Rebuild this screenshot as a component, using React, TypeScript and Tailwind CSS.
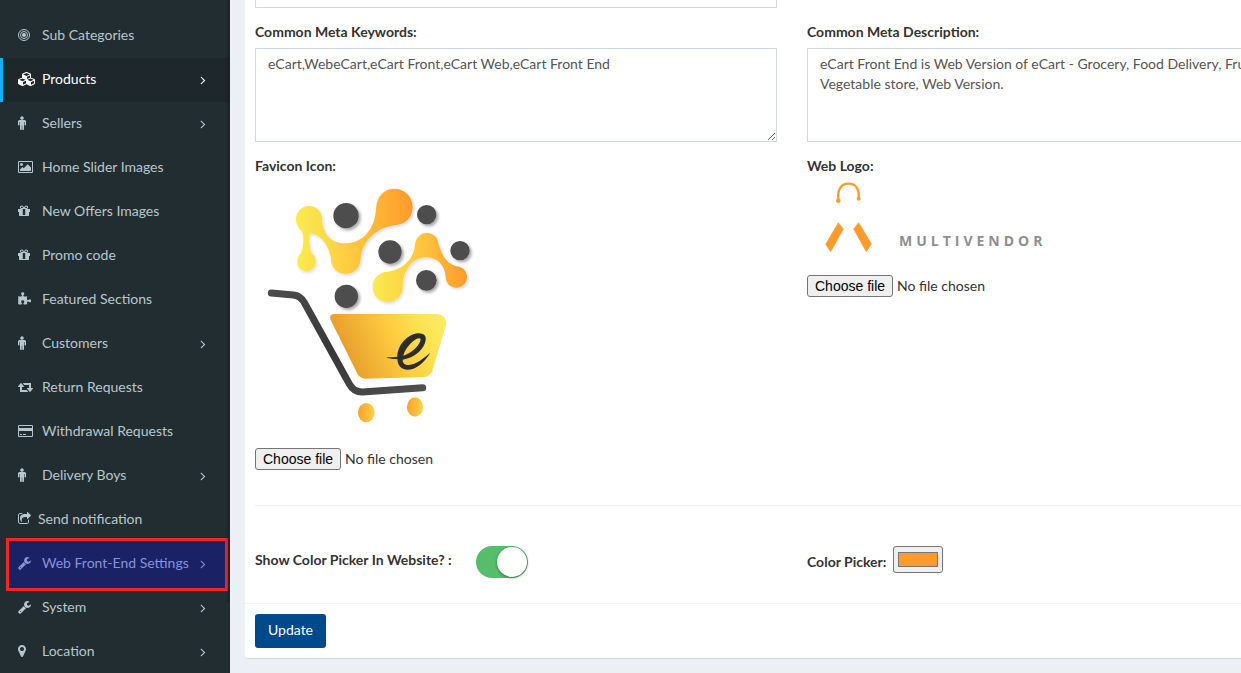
import React, { useState } from "react";

type Glyph = { box: string; width: string; path: React.ReactNode };

const glyphs: Record<string, Glyph> = {
  bullseye: {
    box: "128 0 1536 1792",
    width: "w-3",
    path: (
      <>
        <circle cx="896" cy="896" r="256" />
        <circle cx="896" cy="896" r="448" fill="none" stroke="currentColor" strokeWidth="128" />
        <circle cx="896" cy="896" r="704" fill="none" stroke="currentColor" strokeWidth="128" />
      </>
    ),
  },
  cubes: {
    box: "0 0 2304 1792",
    width: "w-[18px]",
    path: (
      <path d="M640 1632l384-192v-314l-384 164v342zm-64-454l404-173-404-173-404 173zm1088 454l384-192v-314l-384 164v342zm-64-454l404-173-404-173-404 173zm-448-293l384-165v-266l-384 164v267zm-64-379l441-189-441-189-441 189zm1088 518v416q0 36-19 67t-52 47l-448 224q-25 14-57 14t-57-14l-448-224q-4-2-7-4-2 2-7 4l-448 224q-25 14-57 14t-57-14l-448-224q-33-16-52-47t-19-67v-416q0-38 21.5-70t56.5-48l434-186v-400q0-38 21.5-70t56.5-48l448-192q23-10 50-10t50 10l448 192q35 16 56.5 48t21.5 70v400l434 186q36 16 57 48t21 70z" />
    ),
  },
  male: {
    box: "384 0 1024 1792",
    width: "w-2",
    path: (
      <path d="M1408 704v416q0 40-28 68t-68 28-68-28-28-68v-352h-64v912q0 46-33 79t-79 33-79-33-33-79v-464h-64v464q0 46-33 79t-79 33-79-33-33-79v-912h-64v352q0 40-28 68t-68 28-68-28-28-68v-416q0-80 56-136t136-56h640q80 0 136 56t56 136zm-288-448q0 93-65.5 158.5t-158.5 65.5-158.5-65.5-65.5-158.5 65.5-158.5 158.5-65.5 158.5 65.5 65.5 158.5z" />
    ),
  },
  picture: {
    box: "-64 0 1920 1792",
    width: "w-[15px]",
    path: (
      <path d="M576 576q0 80-56 136t-136 56-136-56-56-136 56-136 136-56 136 56 56 136zm1024 384v448h-1408v-192l320-320 160 160 512-512zm96-704h-1600q-13 0-22.5 9.5t-9.5 22.5v1216q0 13 9.5 22.5t22.5 9.5h1600q13 0 22.5-9.5t9.5-22.5v-1216q0-13-9.5-22.5t-22.5-9.5zm160 32v1216q0 66-47 113t-113 47h-1600q-66 0-113-47t-47-113v-1216q0-66 47-113t113-47h1600q66 0 113 47t47 113z" />
    ),
  },
  gift: {
    box: "128 0 1536 1792",
    width: "w-3",
    path: (
      <path d="M1056 1356v-716h-320v716q0 25 18 38.5t46 13.5h192q28 0 46-13.5t18-38.5zm-456-844h195l-126-161q-26-31-69-31-40 0-68 28t-28 68 28 68 68 28zm688-96q0-40-28-68t-68-28q-43 0-69 31l-125 161h194q40 0 68-28t28-68zm376 256v320q0 14-9 23t-23 9h-96v416q0 40-28 68t-68 28h-1088q-40 0-68-28t-28-68v-416h-96q-14 0-23-9t-9-23v-320q0-14 9-23t23-9h440q-93 0-158.5-65.5t-65.5-158.5 65.5-158.5 158.5-65.5q107 0 168 77l128 165 128-165q61-77 168-77 93 0 158.5 65.5t65.5 158.5-65.5 158.5-158.5 65.5h440q14 0 23 9t9 23z" />
    ),
  },
  puzzle: {
    box: "64 0 1664 1792",
    width: "w-[13px]",
    path: (
      <path d="M1755 1131q0 81-44.5 135t-123.5 54q-41 0-77.5-17.5t-59-38-56.5-38-71-17.5q-110 0-110 124 0 39 16 115t15 115v5q-22 0-33 1-34 3-97.5 11.5t-115.5 13.5-98 5q-61 0-103-26.5t-42-83.5q0-37 17.5-71t38-56.5 38-59 17.5-77.5q0-79-54-123.5t-135-44.5q-84 0-143 45.5t-59 127.5q0 43 15 83t33.5 64.5 33.5 53 15 50.5q0 45-46 89-37 35-117 35-95 0-245-24-9-2-27.5-4t-27.5-4l-13-2q-1 0-3-1-2 0-2-1v-1024q2 1 17.5 3.5t34 5 21.5 3.5q150 24 245 24 80 0 117-35 46-44 46-89 0-22-15-50.5t-33.5-53-33.5-64.5-15-83q0-82 59-127.5t144-45.5q80 0 134 44.5t54 123.5q0 41-17.5 77.5t-38 59-38 56.5-17.5 71q0 57 42 83.5t103 26.5q64 0 180-15t163-17v2q-1 2-3.5 17.5t-5 34-3.5 21.5q-24 150-24 245 0 80 35 117 44 46 89 46 22 0 50.5-15t53-33.5 64.5-33.5 83-15q82 0 127.5 59t45.5 143z" />
    ),
  },
  retweet: {
    box: "0 0 1920 1792",
    width: "w-[15px]",
    path: (
      <path d="M1280 1504q0 13-9.5 22.5t-22.5 9.5h-960q-8 0-13.5-2t-9-7-5.5-8-3-11.5-1-11.5v-600h-192q-26 0-45-19t-19-45q0-24 15-41l320-384q19-22 49-22t49 22l320 384q15 17 15 41 0 26-19 45t-45 19h-192v384h576q16 0 25 11l160 192q7 10 7 21zm640-416q0 24-15 41l-320 384q-20 23-49 23t-49-23l-320-384q-15-17-15-41 0-26 19-45t45-19h192v-384h-576q-16 0-25-12l-160-192q-7-9-7-20 0-13 9.5-22.5t22.5-9.5h960q8 0 13.5 2t9 7 5.5 8 3 11.5 1 11.5v600h192q26 0 45 19t19 45z" />
    ),
  },
  card: {
    box: "0 0 1920 1792",
    width: "w-[15px]",
    path: (
      <path d="M1760 128q66 0 113 47t47 113v1216q0 66-47 113t-113 47h-1600q-66 0-113-47t-47-113v-1216q0-66 47-113t113-47h1600zm-1600 128q-13 0-22.5 9.5t-9.5 22.5v224h1664v-224q0-13-9.5-22.5t-22.5-9.5h-1600zm1600 1280q13 0 22.5-9.5t9.5-22.5v-608h-1664v608q0 13 9.5 22.5t22.5 9.5h1600zm-1504-128v-128h256v128h-256zm384 0v-128h384v128h-384z" />
    ),
  },
  share: {
    box: "64 0 1664 1792",
    width: "w-[13px]",
    path: (
      <path d="M1472 989v259q0 119-84.5 203.5t-203.5 84.5h-832q-119 0-203.5-84.5t-84.5-203.5v-832q0-119 84.5-203.5t203.5-84.5h255q13 0 22.5 9.5t9.5 22.5q0 27-26 32-77 26-133 60-10 4-16 4h-112q-66 0-113 47t-47 113v832q0 66 47 113t113 47h832q66 0 113-47t47-113v-214q0-19 18-29 28-13 54-37 16-16 35-8 21 9 21 29zm237-496l-384 384q-18 19-45 19-12 0-25-5-39-17-39-59v-192h-160q-323 0-438 131-119 137-74 473 3 23-20 34-8 2-12 2-16 0-26-13-10-14-21-31t-39.5-68.5-49.5-99.5-38.5-114-17.5-122q0-49 3.5-91t14-90 28-88 47-81.5 68.5-74 94.5-61.5 124.5-48.5 159.5-30.5 196.5-11h160v-192q0-42 39-59 13-5 25-5 26 0 45 19l384 384q19 19 19 45t-19 45z" />
    ),
  },
  wrench: {
    box: "64 0 1664 1792",
    width: "w-[13px]",
    path: (
      <path d="M448 1472q0-26-19-45t-45-19-45 19-19 45 19 45 45 19 45-19 19-45zm644-420l-682 682q-37 37-90 37-52 0-91-37l-106-108q-38-36-38-90 0-53 38-91l681-681q39 98 114.5 173.5t173.5 114.5zm634-435q0 39-23 106-47 134-164.5 217.5t-258.5 83.5q-185 0-316.5-131.5t-131.5-316.5 131.5-316.5 316.5-131.5q58 0 121.5 16.5t107.5 46.5q16 11 16 28t-16 28l-293 169v224l193 107q5-3 79-48.5t135.5-81 70.5-35.5q15 0 23.5 10t8.5 25z" />
    ),
  },
  marker: {
    box: "384 0 1024 1792",
    width: "w-2",
    path: (
      <path d="M1152 640q0-106-75-181t-181-75-181 75-75 181 75 181 181 75 181-75 75-181zm256 0q0 109-33 179l-364 774q-16 33-47.5 52t-67.5 19-67.5-19-46.5-52l-365-774q-33-70-33-179 0-212 150-362t362-150 362 150 150 362z" />
    ),
  },
  angle: {
    box: "512 0 768 1792",
    width: "w-[6px]",
    path: (
      <path d="M1171 960q0 13-10 23l-466 466q-10 10-23 10t-23-10l-50-50q-10-10-10-23t10-23l393-393-393-393q-10-10-10-23t10-23l50-50q10-10 23-10t23 10l466 466q10 10 10 23z" />
    ),
  },
};

function Icon({ name }: { name: string }) {
  const g = glyphs[name];
  return (
    <svg viewBox={g.box} fill="currentColor" aria-hidden="true" className={`h-3.5 shrink-0 ${g.width}`}>
      {g.path}
    </svg>
  );
}

type Item = { label: string; icon: string; more?: boolean; state?: "active" | "marked"; tight?: boolean };

const items: Item[] = [
  { label: "Sub Categories", icon: "bullseye" },
  { label: "Products", icon: "cubes", more: true, state: "active" },
  { label: "Sellers", icon: "male", more: true },
  { label: "Home Slider Images", icon: "picture" },
  { label: "New Offers Images", icon: "gift" },
  { label: "Promo code", icon: "gift" },
  { label: "Featured Sections", icon: "puzzle" },
  { label: "Customers", icon: "male", more: true },
  { label: "Return Requests", icon: "retweet" },
  { label: "Withdrawal Requests", icon: "card" },
  { label: "Delivery Boys", icon: "male", more: true },
  { label: "Send notification", icon: "share", tight: true },
  { label: "Web Front-End Settings", icon: "wrench", more: true, state: "marked" },
  { label: "System", icon: "wrench", more: true },
  { label: "Location", icon: "marker", more: true },
];

function rowColors(state?: Item["state"]) {
  if (state === "active") return "border-[#12b0ff] bg-[#1e282c] text-white";
  if (state === "marked") return "border-transparent text-[#8792dc]";
  return "border-transparent text-[#b8c7ce]";
}

function Sidebar() {
  return (
    <aside className="relative w-[230px] shrink-0 bg-[#222d32] pt-[14px]">
      <nav aria-label="Main">
        <ul>
          {items.map((item) => (
            <li key={item.label} className="relative">
              {item.state === "marked" && (
                <span className="absolute -top-1 -bottom-[5px] left-[6px] right-[2px] border-3 border-[#ee2529] bg-[#1a2164]" />
              )}
              <a
                href="#"
                className={`relative flex h-11 items-center border-l-3 pb-[2px] pl-[15px] pr-6 text-[14px] leading-5 ${rowColors(item.state)}`}
              >
                <span className={`flex shrink-0 ${item.tight ? "w-5" : "w-6"}`}>
                  <Icon name={item.icon} />
                </span>
                <span className="flex-1 whitespace-nowrap">{item.label}</span>
                {item.more && (
                  <span className="flex pt-[2px]">
                    <Icon name="angle" />
                  </span>
                )}
              </a>
            </li>
          ))}
        </ul>
      </nav>
      <span className="absolute right-0 top-0 h-[603px] w-1 bg-black/10" />
    </aside>
  );
}

function FavIcon() {
  const dots = [
    [258, 107, 38],
    [500, 104, 29],
    [390, 216, 35],
    [600, 212, 29],
    [499, 301, 31],
    [259, 349, 35],
  ];
  return (
    <svg viewBox="-15 0 660 750" className="h-[250px] w-[220px]" role="img" aria-label="Shopping cart">
      <defs>
        <linearGradient id="warm">
          <stop offset="0" stopColor="#f9ec4f" />
          <stop offset="0.45" stopColor="#ffcb41" />
          <stop offset="1" stopColor="#ff9a2b" />
        </linearGradient>
        <linearGradient id="basket" x1="0" y1="0.65" x2="1" y2="0.4">
          <stop offset="0" stopColor="#e08f28" />
          <stop offset="0.25" stopColor="#edab32" />
          <stop offset="0.6" stopColor="#ffcd40" />
          <stop offset="0.85" stopColor="#fde254" />
          <stop offset="1" stopColor="#fdea5e" />
        </linearGradient>
        <linearGradient id="wheel">
          <stop offset="0" stopColor="#ff9f2e" />
          <stop offset="1" stopColor="#fbd448" />
        </linearGradient>
        <linearGradient id="frame" x1="0" y1="0" x2="1" y2="1">
          <stop offset="0" stopColor="#4b4b4b" />
          <stop offset="0.5" stopColor="#383838" />
          <stop offset="1" stopColor="#505050" />
        </linearGradient>
        <filter id="drop" x="-20%" y="-20%" width="150%" height="150%">
          <feDropShadow dx="6" dy="6" stdDeviation="4" floodColor="#000" floodOpacity="0.35" />
        </filter>
        <filter id="soft" x="-10%" y="-10%" width="130%" height="130%">
          <feDropShadow dx="4" dy="5" stdDeviation="4" floodColor="#000" floodOpacity="0.15" />
        </filter>
      </defs>
      <g fill="url(#warm)" filter="url(#soft)">
        <path d="M108 117C108 95 126 78 147 78C170 78 186 95 186 117C188 165 215 190 255 190C315 190 346 140 348 85C350 50 372 26 402 26C434 26 458 50 458 82C458 112 436 135 402 136C350 145 308 180 302 235C302 262 284 282 257 282C230 282 213 262 213 238C208 195 180 160 147 160C146 180 148 200 155 219C163 226 167 235 167 245C167 261 155 273 139 273C123 273 112 261 112 245C112 235 117 225 123 219C132 195 133 170 125 152C115 143 108 132 108 117Z" />
        <path d="M338 320C338 293 358 276 385 275C430 268 462 235 465 195C467 173 482 159 500 159C520 159 534 173 535 190C545 225 560 252 590 259C608 260 621 274 621 291C621 309 607 323 589 323C570 323 558 309 557 291C555 255 530 232 500 232C460 232 430 265 428 320C428 346 408 366 383 366C357 366 338 346 338 320Z" />
      </g>
      <g fill="#4d4d4d" filter="url(#drop)">
        {dots.map(([cx, cy, r]) => (
          <circle key={`${cx}-${cy}`} cx={cx} cy={cy} r={r} />
        ))}
      </g>
      <path
        d="M34 339L100 345Q120 347 132 366L268 612Q282 637 308 636L488 623"
        fill="none"
        stroke="url(#frame)"
        strokeWidth="21"
        strokeLinecap="round"
        strokeLinejoin="round"
      />
      <path
        d="M222 402H533Q561 406 558 434L517 573Q509 590 492 591L315 596Q300 595 293 583L212 420Q206 404 222 402Z"
        fill="url(#basket)"
      />
      <path
        d="M378 532C392 531 404 532 412 530C412 498 440 463 475 460C492 461 499 467 497 480C494 505 467 533 428 539C428 550 434 555 446 555C468 553 490 536 511 518C494 546 470 569 442 569C424 568 413 557 412 537C400 538 388 536 378 532ZM430 527C455 518 476 499 481 482C485 470 470 474 460 483C444 497 433 513 430 527Z"
        fill="#2f2d2a"
      />
      <ellipse cx="319" cy="698" rx="25" ry="29" fill="url(#wheel)" />
      <ellipse cx="465" cy="681" rx="24" ry="29" fill="url(#wheel)" />
    </svg>
  );
}

function WebLogo() {
  return (
    <div className="flex h-[75px] items-end gap-[26px] pl-4">
      <svg viewBox="69 72 150 225" className="h-[75px] w-[50px]" fill="#ff9a2d" aria-hidden="true">
        <path d="M115 135C112 105 122 86 145 86C170 86 178 105 176 130" fill="none" stroke="#ff9a2d" strokeWidth="7" />
        <circle cx="115" cy="137" r="7" />
        <circle cx="176" cy="131" r="6" />
        <g stroke="#ff9a2d" strokeWidth="2" strokeLinejoin="round">
          <path d="M115 203L130 222L92 290L77 268Z" />
          <path d="M176 203L161 222L199 290L214 266Z" />
        </g>
      </svg>
      <span className="pb-[3px] font-['Open_Sans',sans-serif] text-[14px] font-bold leading-5 tracking-[4px] text-[#8f8f8f]">
        MULTIVENDOR
      </span>
    </div>
  );
}

function FileField({ id }: { id: string }) {
  const [name, setName] = useState("No file chosen");
  return (
    <div className="relative flex">
      <input
        id={id}
        type="file"
        className="peer sr-only"
        onChange={(e) => setName(e.target.files?.[0]?.name ?? "No file chosen")}
      />
      <label htmlFor={id} className="flex items-center gap-1 leading-5">
        <span className="rounded-[3px] border border-[#767676] bg-[#efefef] px-[7px] font-['Liberation_Sans',sans-serif] text-black">
          Choose file
        </span>
        <span>{name}</span>
      </label>
    </div>
  );
}

const areaClass =
  "block h-[94px] w-full resize border border-[#d2d6de] bg-white px-3 py-[5px] text-[14px] leading-5 text-[#555]";

export default function App() {
  const [on, setOn] = useState(true);
  const [color, setColor] = useState("#ff9a2d");
  return (
    <div className="flex h-screen overflow-hidden bg-[#ecf0f5] font-['Lato',sans-serif] text-[14px] leading-5 text-[#333]">
      <Sidebar />
      <main className="min-w-0 flex-1 overflow-hidden pl-[15px]">
        <form
          className="min-w-[1094px] rounded-b-[3px] border-b border-[#d2d6de] bg-white"
          onSubmit={(e) => e.preventDefault()}
        >
          <div className="px-[10px] pb-[25px]">
            <div className="grid grid-cols-2 gap-x-[30px]">
              <div className="h-2 border border-t-0 border-[#d2d6de]" />
              <div />
              <div className="mt-[14px]">
                <label htmlFor="keywords" className="mb-[6px] block font-bold">
                  Common Meta Keywords:
                </label>
                <textarea id="keywords" className={areaClass} defaultValue="eCart,WebeCart,eCart Front,eCart Web,eCart Front End" />
              </div>
              <div className="mt-[14px]">
                <label htmlFor="description" className="mb-[6px] block font-bold">
                  Common Meta Description:
                </label>
                <textarea
                  id="description"
                  className={areaClass}
                  defaultValue={"eCart Front End is Web Version of eCart - Grocery, Food Delivery, Fruits &\nVegetable store, Web Version."}
                />
              </div>
              <div className="mt-[14px]">
                <label htmlFor="favicon" className="block font-bold">
                  Favicon Icon:
                </label>
                <div className="mt-1 mb-[18px]">
                  <FavIcon />
                </div>
                <FileField id="favicon" />
              </div>
              <div className="mt-[14px]">
                <label htmlFor="logo" className="block font-bold">
                  Web Logo:
                </label>
                <div className="mt-[3px] mb-[21px]">
                  <WebLogo />
                </div>
                <FileField id="logo" />
              </div>
            </div>
            <hr className="mt-[35px] mb-10 border-[#eee]" />
            <div className="grid grid-cols-2 gap-x-[30px]">
              <div className="flex items-center gap-6">
                <label htmlFor="picker" className="pb-1 font-bold">
                  Show Color Picker In Website? :
                </label>
                <input
                  id="picker"
                  type="checkbox"
                  role="switch"
                  checked={on}
                  onChange={(e) => setOn(e.target.checked)}
                  className="flex h-8 w-[52px] appearance-none justify-start rounded-full bg-[#dfdfdf] p-px before:size-[30px] before:rounded-full before:bg-white before:shadow-[0_1px_3px_rgba(0,0,0,0.4)] before:content-[''] checked:justify-end checked:bg-[#56be6a]"
                />
              </div>
              <div className="flex items-start gap-[7px]">
                <label htmlFor="color" className="pt-[6px] font-bold">
                  Color Picker:
                </label>
                <input
                  id="color"
                  type="color"
                  value={color}
                  onChange={(e) => setColor(e.target.value)}
                  className="h-[27px] w-[50px] rounded-[3px] border border-[#767676] bg-[#efefef] px-[2px] py-px"
                />
              </div>
            </div>
          </div>
          <div className="border-t border-[#f4f4f4] p-[10px]">
            <button type="submit" className="h-[34px] rounded-[3px] bg-[#004a8b] px-[13px] pb-[2px] text-white">
              Update
            </button>
          </div>
        </form>
      </main>
    </div>
  );
}
